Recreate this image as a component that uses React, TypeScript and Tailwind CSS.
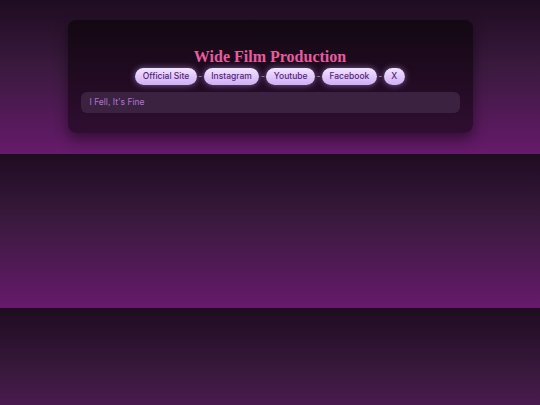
const links = ['Official Site', 'Instagram', 'Youtube', 'Facebook', 'X']

export default function App() {
  return (
    <div className="h-[405px] overflow-hidden bg-[linear-gradient(180deg,#1e0c21_0%,#3b1a3f_45%,#661a6b_100%)] bg-[length:100%_154px] bg-repeat-y pt-5">
      <div className="mx-auto w-3/4 rounded-lg bg-[linear-gradient(180deg,#120812_0%,#2f0e31_100%)] px-[13px] pt-[26px] pb-5 shadow-[0_6px_14px_rgba(0,0,0,0.45)]">
        <h1 className="text-center font-['Liberation_Serif',serif] text-[16px] font-bold leading-[21px] text-[#e65c9e]">
          Wide Film Production
        </h1>
        <div className="mt-[1px] flex items-center justify-center font-['Inter',sans-serif] text-[8.5px] font-medium">
          {links.map((l, i) => (
            <div key={l} className="flex items-center">
              {i > 0 && <span className="mx-[1.5px] text-[#9a8a9e]">-</span>}
              <span className="flex h-[17px] items-center rounded-full bg-[linear-gradient(180deg,#f2e4ff_0%,#cfaef5_100%)] px-[7.5px] text-[#55237a] shadow-[0_0_6px_rgba(205,160,255,0.55)]">
                {l}
              </span>
            </div>
          ))}
        </div>
        <div className="mt-[7px] flex h-[21px] items-center rounded-md bg-[#3a2240] px-[9px] font-['Inter',sans-serif] text-[8.5px] text-[#b472d6]">
          I Fell, It's Fine
        </div>
      </div>
    </div>
  )
}
